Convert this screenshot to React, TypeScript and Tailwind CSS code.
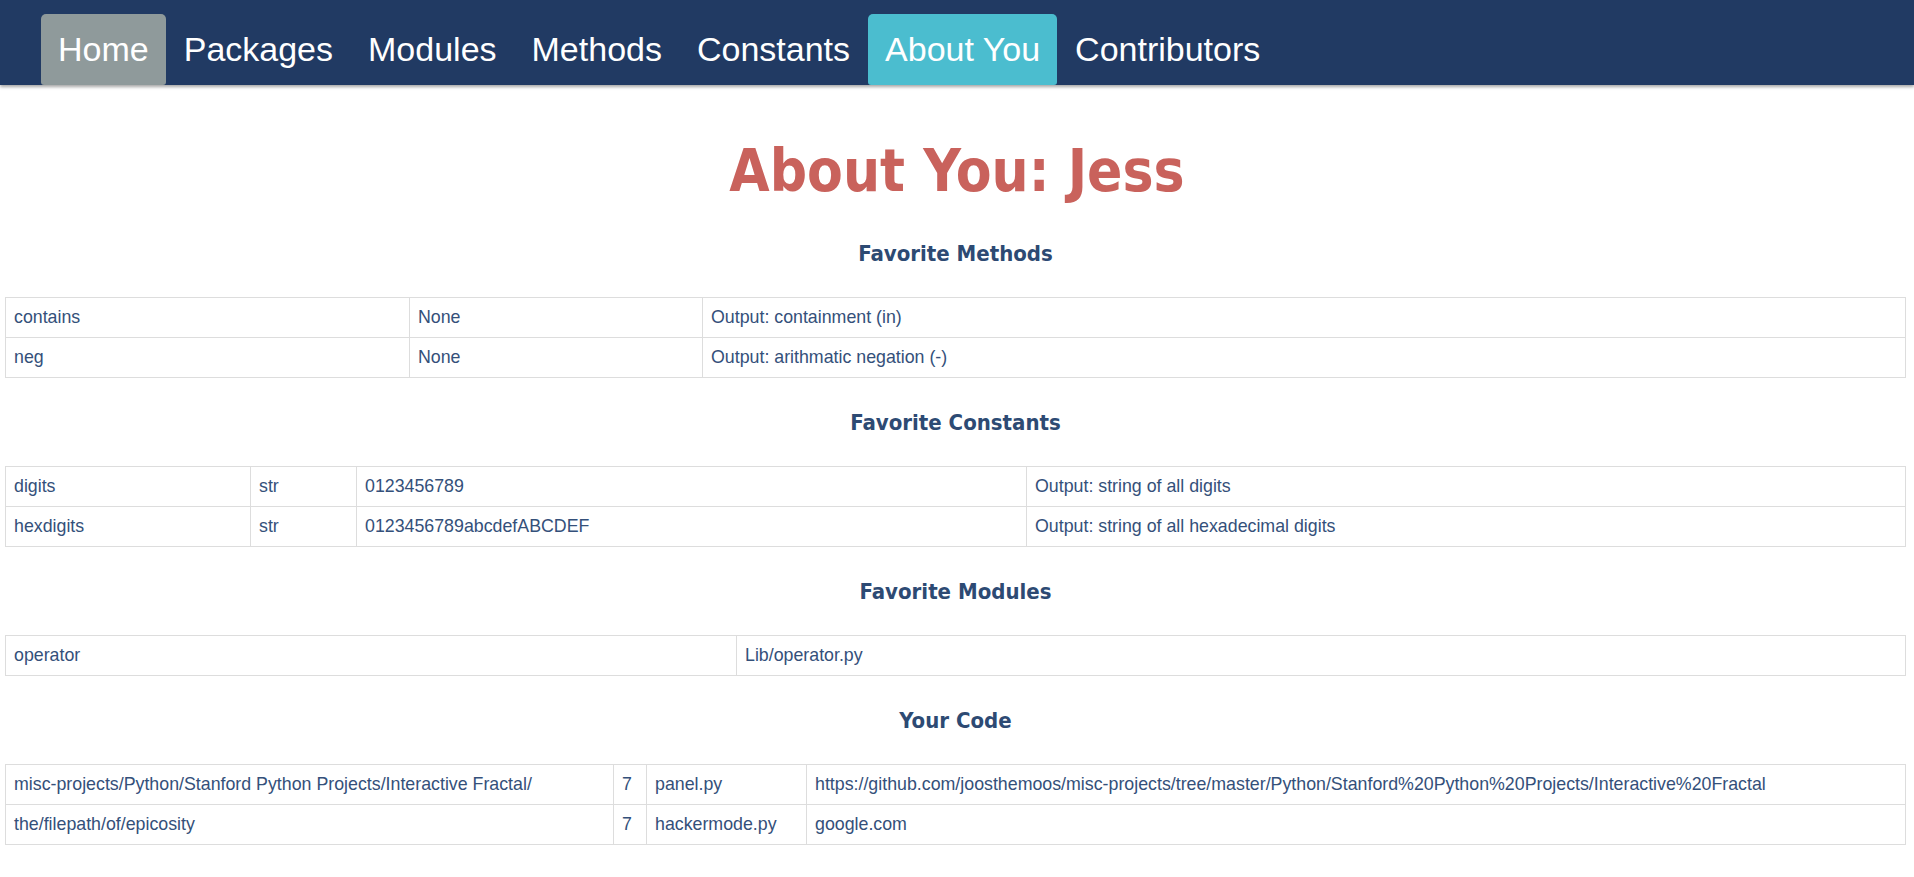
import React from "react";

const navItems = ["Home", "Packages", "Modules", "Methods", "Constants", "About You", "Contributors"];

function Heading({ children, first }: { children: React.ReactNode; first?: boolean }) {
  return (
    <h3
      className={`${first ? "mt-[34px]" : "mt-[32px]"} mb-[30px] text-center text-[22px] leading-[26px] font-bold text-[#2d4a73]`}
      style={{ fontFamily: '"DejaVu Sans Condensed", "DejaVu Sans", sans-serif', fontStretch: "condensed" }}
    >
      {children}
    </h3>
  );
}

function Table({ rows, widths }: { rows: string[][]; widths: string[] }) {
  return (
    <table className="w-full table-fixed border-collapse">
      <tbody>
        {rows.map((r, i) => (
          <tr key={i}>
            {r.map((c, j) => (
              <td
                key={j}
                className={`border border-[#dddddd] px-[8px] py-[8px] text-[17.8px] leading-[23px] text-[#34507a] whitespace-nowrap overflow-hidden ${widths[j] || ""}`}
              >
                {c}
              </td>
            ))}
          </tr>
        ))}
      </tbody>
    </table>
  );
}

export default function App() {
  return (
    <div className="min-h-[877px] bg-white" style={{ fontFamily: '"Liberation Sans", Arial, sans-serif' }}>
      <nav className="h-[85px] bg-[#213a63] shadow-[0_2px_3px_rgba(0,0,0,0.35)] flex items-end pl-[41px]">
        <ul className="flex items-end gap-[1px] h-full pt-[14px]">
          {navItems.map((n) => (
            <li
              key={n}
              className={`h-full flex items-center px-[17px] rounded-t-[5px] rounded-b-[3px] text-[34px] text-white ${
                n === "Home" ? "bg-[#8f9a9b]" : n === "About You" ? "bg-[#4bbdcf]" : ""
              }`}
            >
              {n}
            </li>
          ))}
        </ul>
      </nav>

      <h1
        className="mt-[52px] text-center text-[58px] leading-[1.2] font-bold text-[#c9625c]"
        style={{ fontFamily: '"DejaVu Sans Condensed", "DejaVu Sans", sans-serif', fontStretch: "condensed" }}
      >
        About You: Jess
      </h1>

      <div className="pl-[5px] pr-[8px]">
        <Heading first>Favorite Methods</Heading>
        <Table
          widths={["w-[404px]", "w-[293px]", ""]}
          rows={[
            ["contains", "None", "Output: containment (in)"],
            ["neg", "None", "Output: arithmatic negation (-)"],
          ]}
        />
        <Heading>Favorite Constants</Heading>
        <Table
          widths={["w-[245px]", "w-[106px]", "w-[670px]", ""]}
          rows={[
            ["digits", "str", "0123456789", "Output: string of all digits"],
            ["hexdigits", "str", "0123456789abcdefABCDEF", "Output: string of all hexadecimal digits"],
          ]}
        />
        <Heading>Favorite Modules</Heading>
        <Table widths={["w-[731px]", ""]} rows={[["operator", "Lib/operator.py"]]} />
        <Heading>Your Code</Heading>
        <Table
          widths={["w-[608px]", "w-[33px]", "w-[160px]", ""]}
          rows={[
            [
              "misc-projects/Python/Stanford Python Projects/Interactive Fractal/",
              "7",
              "panel.py",
              "https://github.com/joosthemoos/misc-projects/tree/master/Python/Stanford%20Python%20Projects/Interactive%20Fractal",
            ],
            ["the/filepath/of/epicosity", "7", "hackermode.py", "google.com"],
          ]}
        />
      </div>
    </div>
  );
}
